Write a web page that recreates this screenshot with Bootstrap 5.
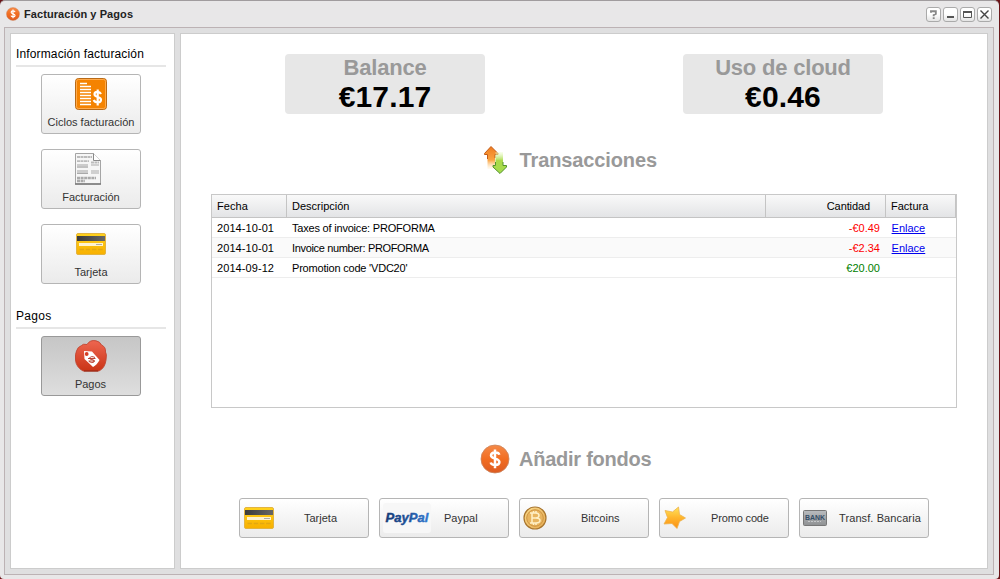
<!DOCTYPE html>
<html lang="es">
<head>
<meta charset="utf-8">
<meta name="viewport" content="width=device-width, initial-scale=1">
<title>Facturación y Pagos</title>
<link href="https://cdn.jsdelivr.net/npm/bootstrap@5.3.0/dist/css/bootstrap.min.css" rel="stylesheet">
<style>
body{font-family:"Liberation Sans",Arial,sans-serif;font-size:11px;line-height:20px;color:#000;background:#6b1418;height:579px;overflow:hidden}
.win{height:579px;width:999px;background:#e8e7e8;border-top:1px solid #a09c9e;border-radius:5px 5px 4px 4px;padding:0 5px 4px 4px}
.titlebar{height:26px;padding:0 2px 0 2px}
.titlebar h1{font-size:11px;font-weight:700;color:#222;letter-spacing:.08px;line-height:26px}
.tools{gap:2px}
.tool{width:15px;height:15px;border:1px solid #aaa;border-radius:3px;background:linear-gradient(#fff 45%,#e4e4e4);padding:0;line-height:0}
.frame{height:548px;background:#dfdfe0;border:1px solid #bcb2b4;padding:5px;gap:5px}
.pane{background:#fff;border:1px solid #ccc}
.side{width:165px;padding:10px 8px 0 5px}
.side h2{font-size:12px;line-height:20px;height:23px;border-bottom:2px solid #e6e6e6;letter-spacing:.14px;margin:0}
.side h2.second{margin-top:22px;letter-spacing:.3px}
.tiles{gap:15px;padding-top:7px}
.bt{font-size:11px;color:#333;border:1px solid #b5b5b5;border-radius:3px;background:linear-gradient(#fff,#ebebeb);padding:0;line-height:16px}
.tile{width:100px;height:60px;padding:3px 0}
.tile.pressed{background:linear-gradient(#c6c6c6,#dedede);border-color:#999}
.tile.pressed span{position:static;margin-right:1px}
.pay{width:130px;height:40px;padding-left:3px}
.boxes{padding:20px 0 0 104px;gap:198px}
.box{width:200px;height:60px;background:#e7e7e7;border-radius:4px;text-align:center}
.box b{display:block}
.cap{font-size:22px;line-height:28px;color:#999;letter-spacing:-.2px}
.amt{font-size:30px;line-height:30px;letter-spacing:.15px}
.sec{font-size:20px;font-weight:700;color:#999;margin:0;line-height:30px;letter-spacing:-.12px}
.sec-a{margin:31px 0 19px 302px;height:30px;gap:10.5px}
.sec-b{margin:36px 0 24px 299px;height:30px;gap:9px}
.sec-b .sec{letter-spacing:-.25px}
.grid-box{width:746px;height:214px;border:1px solid #c8c8c8;margin-left:30px}
.grid-row{height:20px;display:grid;grid-template-columns:75px 479px 120px 70px;border-bottom:1px solid #ededed;line-height:20px}
.grid-row>*{padding:0 6px 0 5px}
.grid-row>:first-child{letter-spacing:.08px}
.grid-head{height:23px;line-height:23px;border-bottom:1px solid #c4c4c4;background:linear-gradient(#f9f9f9,#e3e4e6)}
.grid-head>*{border-right:1px solid #c4c4c4}
.grid-head>.qty{padding-right:15px;letter-spacing:-.1px}
.t1{letter-spacing:-.2px}
.t2{letter-spacing:-.34px}
.neg{color:red}
.pos{color:green}
.odd{background:#fafafa}
a{color:#00e;margin-left:.6px}
svg{display:block;flex:none}
</style>
</head>
<body>
<svg width="0" height="0" class="position-absolute">
<defs>
<linearGradient id="or" x2="0" y2="1"><stop stop-color="#f58a48"/><stop offset=".5" stop-color="#f26d21"/><stop offset="1" stop-color="#dd5b22"/></linearGradient>
<linearGradient id="yl" x2="0" y2="1"><stop stop-color="#ffd21c"/><stop offset="1" stop-color="#f8b000"/></linearGradient>
<linearGradient id="rd" x2="0" y2="1"><stop stop-color="#ee6650"/><stop offset="1" stop-color="#ca3416"/></linearGradient>
<linearGradient id="up" x2="0" y2="1"><stop stop-color="#ef7b1f"/><stop offset=".6" stop-color="#fba340"/><stop offset="1" stop-color="#fff0d0" stop-opacity=".3"/></linearGradient>
<linearGradient id="dn" x2="0" y2="1"><stop stop-color="#efffd0" stop-opacity=".4"/><stop offset=".4" stop-color="#a9d94a"/><stop offset="1" stop-color="#a5dc4c"/></linearGradient>
<linearGradient id="st" x2="0" y2="1"><stop stop-color="#ffe45c"/><stop offset=".5" stop-color="#ffb52c"/><stop offset="1" stop-color="#fb8f14"/></linearGradient>
<linearGradient id="gd" x2="1" y2="1"><stop stop-color="#fbdc8c"/><stop offset="1" stop-color="#e5aa50"/></linearGradient>
<linearGradient id="gy" x2="0" y2="1"><stop stop-color="#b9bcbf"/><stop offset="1" stop-color="#8f9193"/></linearGradient>
<linearGradient id="dk" x2="1"><stop stop-color="#3a3a3a"/><stop offset="1" stop-color="#666"/></linearGradient>
<linearGradient id="pp" x2="1"><stop stop-color="#173b78"/><stop offset=".5" stop-color="#1f5199"/><stop offset="1" stop-color="#3279d2"/></linearGradient>
<symbol id="coin" viewBox="0 0 30 30"><circle cx="15" cy="15" r="14" fill="url(#or)" stroke="#c9855f" stroke-width=".8"/><path d="M19.300 10.800C18.700 7.600 11 7.500 11 11.500C11 15.400 19.400 13.900 19.400 18C19.400 22.100 11.500 21.800 10.700 18.500M15 5.500V24.300" fill="none" stroke="#fff" stroke-width="2.500"/></symbol>
<symbol id="cc" viewBox="0 0 30 22"><rect x=".5" y=".5" width="29" height="21" rx="1.500" fill="url(#yl)" stroke="#e3b440"/><path d="M1 3H29V8H1Z" fill="url(#dk)"/><path d="M3 10H27V13H3Z" fill="#fff3d0"/><path d="M20 11.500H26" stroke="#999" stroke-width=".8"/><path d="M3.500 16.500H27" stroke="#e2a812" stroke-width="1.600" stroke-dasharray="4.500 1.700"/></symbol>
</defs></svg>
<main class="win">
<header class="titlebar d-flex align-items-center">
<svg width="14" height="14"><use href="#coin"/></svg>
<h1 class="mb-0 ms-1">Facturación y Pagos</h1>
<div class="tools d-flex ms-auto">
<button class="tool" aria-label="Ayuda"><svg width="13" height="13"><path d="M4 4.700V3.300H8.800V6L6.700 7V8.200M6.700 9.300V11" fill="none" stroke="#888" stroke-width="1.900"/></svg></button>
<button class="tool" aria-label="Minimizar"><svg width="13" height="13"><path d="M3 8H10V10H3Z" fill="#555"/></svg></button>
<button class="tool" aria-label="Maximizar"><svg width="13" height="13"><path d="M2.500 4V9.500H10.500V4M2 4H11" fill="none" stroke="#555"/><path d="M2 3H11V5H2Z" fill="#555"/></svg></button>
<button class="tool" aria-label="Cerrar"><svg width="13" height="13"><path d="M2.500 2.500L10.500 10.500M10.500 2.500L2.500 10.500" stroke="#444" stroke-width="1.400"/></svg></button>
</div>
</header>
<div class="frame d-flex">
<aside class="pane side">
<h2>Información facturación</h2>
<div class="tiles d-flex flex-column align-items-center">
<button class="bt tile d-flex flex-column align-items-center justify-content-between">
<svg width="32" height="32"><rect x=".5" y=".5" width="31" height="31" rx="3" fill="#f58300" stroke="#b96a16"/><rect x="1.500" y="1.500" width="29" height="29" rx="2" fill="none" stroke="#ffab4c"/><path d="M5 5.500H12M5 8.500H16M5 11.500H16M5 14.500H16M5 17.500H16M5 20.500H16M5 23.500H16M5 26.500H16" stroke="#fff" stroke-width="1.300"/><path d="M26 16C24.500 12.800 19.500 13.300 19.500 16.200C19.500 19.600 26 18.300 26 21.700C26 25.200 20 25.200 18.700 22M22.700 11.500V27.500" fill="none" stroke="#fff" stroke-width="2.200"/></svg>
<span>Ciclos facturación</span></button>
<button class="bt tile d-flex flex-column align-items-center justify-content-between">
<svg width="38" height="32"><g transform="translate(6)"><path d="M.5 .5H18.500L25.500 7.500V31H.5Z" fill="#f6f6f6" stroke="#a5a5a5" transform="translate(-3)"/><g transform="translate(-3)"><path d="M0 31H26" stroke="#777" stroke-width="1.500"/><path d="M18.500 .5V7.500H25.500" fill="#fff" stroke="#888"/><path d="M2 4H17M2 8.200H14M16 9.500H24" stroke="#bbb" stroke-width="1.800" stroke-dasharray="3 .5"/><path d="M2 12.500H13M2 18.500H13" stroke="#ccc" stroke-width="3"/><path d="M2 14.200H13M2 20.500H13M16 12H24M16 18H24M16 20H24" stroke="#aaa" stroke-width="1"/><path d="M2 25H21M2 28H10" stroke="#aaa" stroke-width="2.300" stroke-dasharray="3 .6"/></g></g></svg>
<span>Facturación</span></button>
<button class="bt tile d-flex flex-column align-items-center justify-content-between">
<svg width="32" height="32" viewBox="0 0 32 32"><use href="#cc" x="1" y="5" width="30" height="22"/></svg>
<span>Tarjeta</span></button>
</div>
<h2 class="second">Pagos</h2>
<div class="tiles d-flex flex-column align-items-center">
<button class="bt tile pressed d-flex flex-column align-items-center justify-content-between">
<svg width="32" height="32"><path d="M6.500 5.500Q8 3.500 12 4.500Q15-.5 21 .8Q25 1.500 26.500 5Q31 7 30.500 12Q32 14 31 20Q30 28 24 31H8Q1 27 .5 20Q0 14 1.500 11Q2.500 7 6.500 5.500Z" fill="url(#rd)" stroke="#c04632" stroke-width=".9"/><path d="M9 31H23" stroke="#8e210c"/><path d="M9 11L17 11.500L24.500 20Q22 25 18 27L9.500 19Z" fill="#fff"/><circle cx="11.700" cy="14" r="1.900" fill="#d63d23"/><path d="M20 17.500Q16 15.500 14.500 18Q14.500 19.500 17 19.500Q20 20 19 22Q17 23.500 14 21.500M13 18.500H20.500M13.500 21H20" fill="none" stroke="#b3301d" stroke-width=".9"/></svg>
<span>Pagos</span></button>
</div>
</aside>
<section class="pane flex-fill">
<div class="boxes d-flex">
<div class="box"><b class="cap">Balance</b><b class="amt">€17.17</b></div>
<div class="box"><b class="cap">Uso de cloud</b><b class="amt">€0.46</b></div>
</div>
<div class="sec-a d-flex align-items-center">
<svg width="26" height="30"><path d="M8 1.500L15 8.500V9.500H12V24H4.500V9.500H1.500V8.500Z" fill="url(#up)"/><path d="M4.500 14V9.500H1.500V8.500L8 1.500L15 8.500V9.500H12V13" fill="none" stroke="#c35a14"/><path d="M12.500 7H20V20.500H23.500V22L17 28.500L10 22V20.500H12.500Z" fill="url(#dn)"/><path d="M12.500 17V20.500H10V22L17 28.500L23.500 22V20.500H20V17" fill="none" stroke="#52912d"/></svg>
<h2 class="sec">Transacciones</h2></div>
<div class="grid-box">
<div class="grid-row grid-head"><span>Fecha</span><span>Descripción</span><span class="qty text-end">Cantidad</span><span>Factura</span></div>
<div class="grid-row"><span>2014-10-01</span><span class="t1">Taxes of invoice: PROFORMA</span><span class="neg text-end">-€0.49</span><span><a href="#">Enlace</a></span></div>
<div class="grid-row odd"><span>2014-10-01</span><span class="t2">Invoice number: PROFORMA</span><span class="neg text-end">-€2.34</span><span><a href="#">Enlace</a></span></div>
<div class="grid-row"><span>2014-09-12</span><span class="t1">Promotion code 'VDC20'</span><span class="pos text-end">€20.00</span><span></span></div>
</div>
<div class="sec-b d-flex align-items-center">
<svg width="30" height="30"><use href="#coin"/></svg>
<h2 class="sec">Añadir fondos</h2></div>
<div class="d-flex" style="margin-left:58px;gap:10px">
<button class="bt pay d-flex align-items-center"><svg width="31" height="22"><use href="#cc" x="1" width="30" height="22"/></svg><span style="margin-left:30px">Tarjeta</span></button>
<button class="bt pay d-flex align-items-center"><svg width="48" height="30"><rect width="48" height="30" rx="3" fill="#f7f7f7"/><text x="2.500" y="19" font-family="Liberation Sans,sans-serif" font-weight="700" font-style="italic" font-size="13" textLength="43" lengthAdjust="spacingAndGlyphs" fill="url(#pp)" stroke="url(#pp)" stroke-width=".4">PayPal</text></svg><span style="margin-left:13px">Paypal</span></button>
<button class="bt pay d-flex align-items-center"><svg width="24" height="24"><circle cx="12" cy="12" r="11" fill="url(#gd)" stroke="#a8752e" stroke-width="1.200"/><circle cx="12" cy="12" r="8.300" fill="#e8b560" stroke="#d09543"/><path d="M9 7V17M7 7H13Q16 7.200 16 9.500T13 12H9M13 12Q17 12.200 17 14.500T13 17H7M10.500 5V7M13 5V7M10.500 17V19M13 17V19" fill="none" stroke="#fff1c8" stroke-width="1.500"/></svg><span style="margin-left:34px">Bitcoins</span></button>
<button class="bt pay d-flex align-items-center"><svg width="24" height="24"><path d="M15.500 1L16.500 8.500L22.500 12L16.500 15.500L14 22.500L9 17.500L1 18L4.500 11.500L2 4.500L9.500 6Z" fill="url(#st)" stroke="#eeb24b" stroke-width=".8" stroke-linejoin="round"/></svg><span style="margin-left:24px;letter-spacing:-.15px">Promo code</span></button>
<button class="bt pay d-flex align-items-center"><svg width="24" height="18"><rect x=".5" y="1.500" width="23" height="15" rx="1" fill="url(#gy)" stroke="#777"/><text x="2" y="10.500" font-family="Liberation Sans,sans-serif" font-weight="700" font-size="7" textLength="20" lengthAdjust="spacingAndGlyphs" fill="#344e68">BANK</text><path d="M5 12.500H18" stroke="#c5c7c9" stroke-dasharray="2 1"/></svg><span style="margin-left:12px;letter-spacing:.1px">Transf. Bancaria</span></button>
</div>
</section>
</div>
</main>
<script src="https://cdn.jsdelivr.net/npm/bootstrap@5.3.0/dist/js/bootstrap.bundle.min.js"></script>
</body>
</html>
